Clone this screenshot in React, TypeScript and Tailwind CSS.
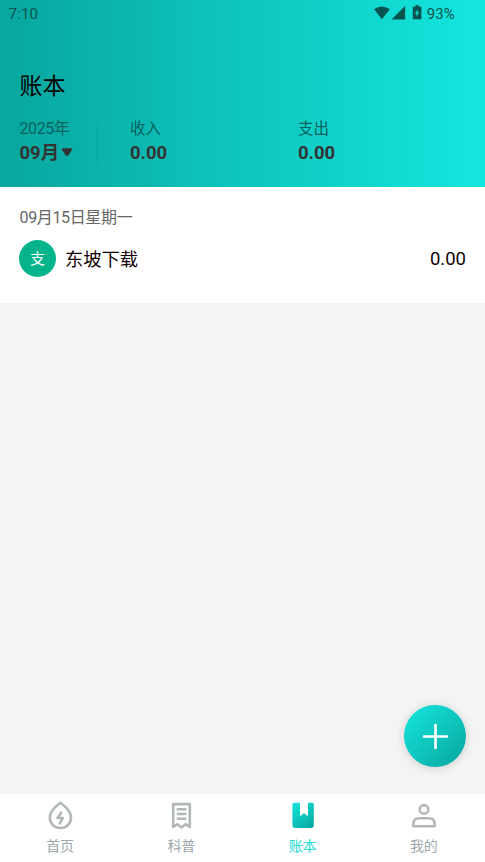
import React, { useState } from 'react';

const HomeIcon: React.FC = () => (
  <svg width="30" height="32" viewBox="0 0 30 32" fill="none">
    <path d="M14.4 3.8C18 6.4 25 11.6 25 18.6C25 24.8 20.4 29 14.4 29S3.8 24.8 3.8 18.6C3.8 11.6 10.8 6.4 14.4 3.8Z" stroke="currentColor" strokeWidth="2.6" strokeLinejoin="round" />
    <path d="M15.2 13.6L11.6 19H16.8L13.8 24.4" stroke="currentColor" strokeWidth="2.6" strokeLinecap="round" strokeLinejoin="round" />
  </svg>
);

const ArticleIcon: React.FC = () => (
  <svg width="30" height="32" viewBox="0 0 30 32" fill="none">
    <path d="M6.2 28V5.1H22.8V28L18.6 25.2L14.5 28.4L10.4 25.2Z" stroke="currentColor" strokeWidth="2.6" strokeLinejoin="round" />
    <path d="M10.8 10.2H18.4M10.8 15H18.4M10.8 19.8H18.4" stroke="currentColor" strokeWidth="2.6" strokeLinecap="round" />
  </svg>
);

const LedgerIcon: React.FC = () => (
  <svg width="30" height="32" viewBox="0 0 30 32" fill="none">
    <defs>
      <linearGradient id="ledger" x1="4" y1="4" x2="26" y2="28" gradientUnits="userSpaceOnUse">
        <stop stopColor="#14e5de" />
        <stop offset="1" stopColor="#08a69e" />
      </linearGradient>
    </defs>
    <path d="M6 3.7H12V16.6L13.4 16.4L16 14L18.6 16.4L20 16.6V3.7H24.2Q25.8 3.7 25.8 5.3V26.6Q25.8 29 23.4 29H6.8Q4.4 29 4.4 26.6V5.3Q4.4 3.7 6 3.7Z" fill="url(#ledger)" />
  </svg>
);

const ProfileIcon: React.FC = () => (
  <svg width="30" height="32" viewBox="0 0 30 32" fill="none">
    <circle cx="15" cy="10.4" r="4.3" stroke="currentColor" strokeWidth="2.6" />
    <path d="M4.4 27.2V25Q4.4 19.3 10.1 19.3H19.9Q25.6 19.3 25.6 25V27.2Z" stroke="currentColor" strokeWidth="2.6" strokeLinejoin="round" />
  </svg>
);

const TABS = [
  { id: 'home', label: '首页', icon: HomeIcon },
  { id: 'articles', label: '科普', icon: ArticleIcon },
  { id: 'ledger', label: '账本', icon: LedgerIcon },
  { id: 'profile', label: '我的', icon: ProfileIcon },
];

const StatusBar: React.FC = () => (
  <div className="flex h-7 items-center justify-between pl-[8.5px] pr-[30px] text-[15px] text-[#07534f]">
    <span className="tracking-[0.2px]">7:10</span>
    <div className="flex items-center">
      <svg width="50" height="16" viewBox="0 0 50 16" fill="currentColor" className="mr-[2.5px] -mt-[2px]">
        <path d="M0 4.2Q7.9 -1.4 15.8 4.2L7.9 14.2Z" />
        <path d="M17.6 14.4L31.2 0.8V14.4Z" />
        <path d="M41.4 0.2H45V1.8H47.4V14.2H38.8V1.8H41.4Z" />
        <path d="M43.8 4.2L40.9 8.6H42.6L42.2 11.8L45.2 7.3H43.4Z" fill="#13dcd4" />
      </svg>
      <span className="tracking-[0.15px]">93%</span>
    </div>
  </div>
);

const Header: React.FC = () => (
  <header className="h-[187px] shrink-0 bg-linear-to-r from-[#08a69e] to-[#14e7df]">
    <StatusBar />
    <h1 className="mt-[42px] pl-[19.5px] text-[23px] leading-[34px] text-black">账本</h1>
    <div className="mt-[13px] flex pl-[19px]">
      {/* Month picker */}
      <button className="w-[78px] text-left">
        <div className="pl-[0.5px] text-[16px] leading-[24px] tracking-[-0.4px] text-[#07625d]">2025年</div>
        <div className="flex items-center pl-[0.5px] text-[18.5px] leading-[24px] font-bold text-[#333]">
          09月
          <svg width="12" height="10" viewBox="0 0 12 10" className="-mt-[2px] ml-[1.5px]">
            <path d="M1.8 1.2H10.2Q12 1.2 10.8 3L7.4 8.2Q6 9.8 4.6 8.2L1.2 3Q0 1.2 1.8 1.2Z" fill="#333" />
          </svg>
        </div>
      </button>
      <div className="mt-2 h-[38px] w-px bg-[#07a39c]" />
      {/* Totals */}
      <div className="ml-8 w-[168px]">
        <div className="text-[15.5px] leading-[24px] text-[#07625d]">收入</div>
        <div className="text-[18.5px] leading-[24px] font-bold text-[#333]">0.00</div>
      </div>
      <div>
        <div className="text-[15.5px] leading-[24px] text-[#07625d]">支出</div>
        <div className="text-[18.5px] leading-[24px] font-bold text-[#333]">0.00</div>
      </div>
    </div>
  </header>
);

export default function App() {
  const [activeTab, setActiveTab] = useState('ledger');

  return (
    <div className="flex h-screen w-full flex-col overflow-hidden bg-[#f4f4f4] font-['Roboto','Noto_Sans_CJK_SC',sans-serif]">
      <Header />

      <main className="flex-1">
        <section className="h-[116px] bg-white px-[19px] pt-[19px]">
          <div className="pl-[0.5px] text-[16px] leading-[24px] tracking-[-0.35px] text-[#666]">09月15日星期一</div>
          <div className="mt-[10px] flex items-center">
            <div className="flex size-[37px] items-center justify-center rounded-full bg-[#06b48b] pt-px text-[15px] text-white">支</div>
            <span className="ml-[9px] pt-[2px] text-[18.3px] text-[#120306]">东坡下载</span>
            <span className="ml-auto pt-[3px] text-[18.5px] text-[#120306]">0.00</span>
          </div>
        </section>
      </main>

      {/* Add record */}
      <button className="absolute top-[705px] left-[404px] flex size-[62px] items-center justify-center rounded-full bg-linear-to-br from-[#14e7df] to-[#08a69e] shadow-[0_1px_10px_rgba(0,0,0,0.16)]">
        <svg width="28" height="28" viewBox="0 0 28 28" fill="none">
          <path d="M14.5 3V26M3 14.5H26" stroke="white" strokeWidth="2.6" strokeLinecap="round" />
        </svg>
      </button>

      <nav className="flex h-[68px] shrink-0 bg-white">
        {TABS.map((tab) => {
          const isActive = tab.id === activeTab;
          const Icon = tab.icon;

          return (
            <button
              key={tab.id}
              onClick={() => setActiveTab(tab.id)}
              className={`flex flex-1 flex-col items-center pt-[5px] ${isActive ? 'text-[#23dcd5]' : 'text-[#b2b7b7]'}`}
            >
              <Icon />
              <span className={`mt-[5px] pr-px text-[14px] leading-[20px] ${isActive ? 'text-[#23dcd5]' : 'text-[#9da8ac]'}`}>{tab.label}</span>
            </button>
          );
        })}
      </nav>
    </div>
  );
}
